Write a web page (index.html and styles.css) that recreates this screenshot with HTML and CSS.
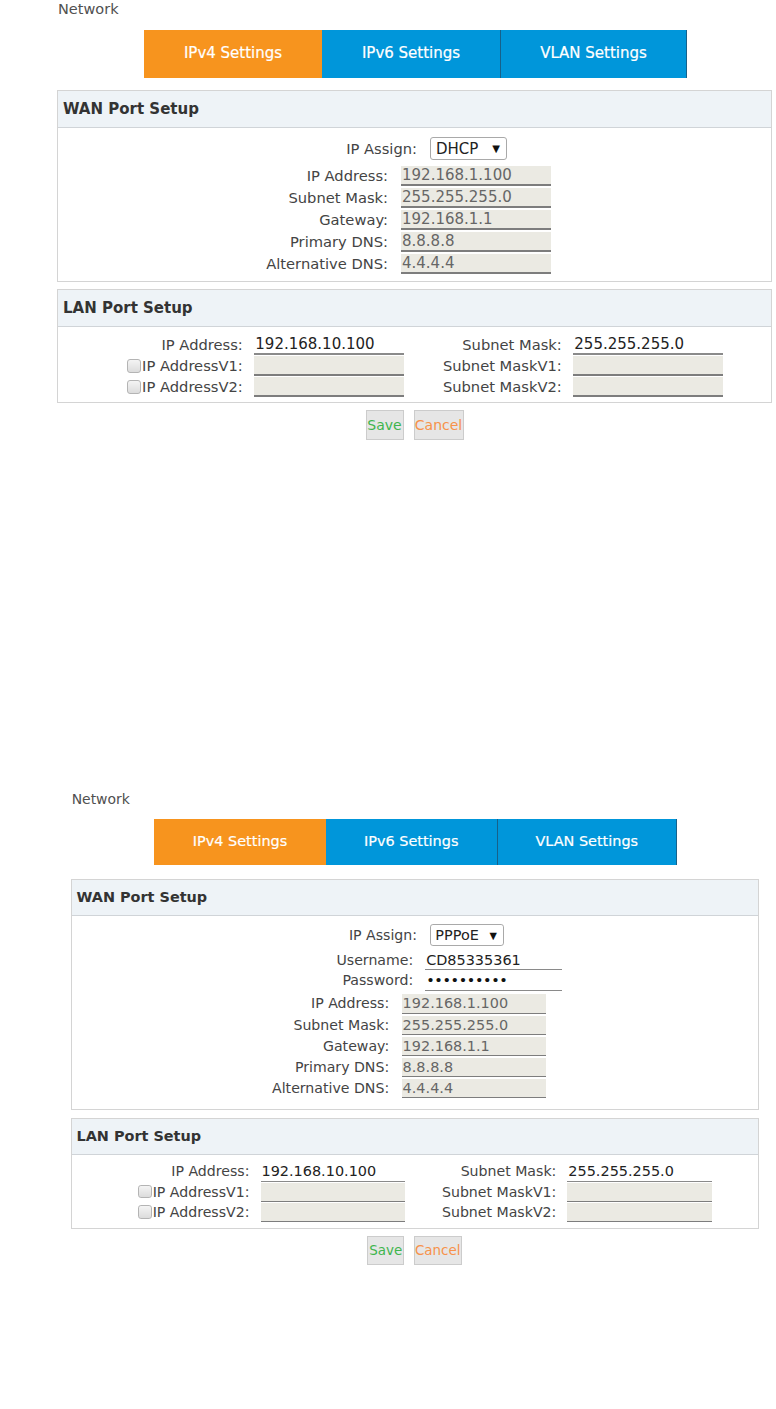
FILE: index.html
```html
<!DOCTYPE html>
<html lang="en">
<head>
<meta charset="utf-8">
<title>Network</title>
<link rel="stylesheet" href="styles.css">
</head>
<body>
<div class="screen screen-dhcp">
  <div class="title">Network</div>
  <div class="tabs">
    <div class="tab tab-active tab-v4">IPv4 Settings</div>
    <div class="tab tab-v6">IPv6 Settings</div>
    <div class="tab tab-vlan">VLAN Settings</div>
  </div>
  <section class="panel">
    <div class="panel-head">WAN Port Setup</div>
    <div class="panel-body wan-body">
      <div class="assign-row">
        <span class="lbl">IP Assign:</span>
        <div class="select"><span>DHCP</span><span class="arrow">▼</span></div>
      </div>
      <div class="ip-grid">
        <span class="lbl">IP Address:</span><span class="field ro">192.168.1.100</span>
        <span class="lbl">Subnet Mask:</span><span class="field ro">255.255.255.0</span>
        <span class="lbl">Gateway:</span><span class="field ro">192.168.1.1</span>
        <span class="lbl">Primary DNS:</span><span class="field ro">8.8.8.8</span>
        <span class="lbl">Alternative DNS:</span><span class="field ro">4.4.4.4</span>
      </div>
    </div>
  </section>
  <section class="panel panel-lan">
    <div class="panel-head">LAN Port Setup</div>
    <div class="panel-body lan-body">
      <div class="lan-grid">
        <span class="lbl">IP Address:</span><span class="field live">192.168.10.100</span>
        <span class="lbl">Subnet Mask:</span><span class="field live">255.255.255.0</span>
        <span class="lbl"><span class="check"></span>IP AddressV1:</span><span class="field ro"></span>
        <span class="lbl">Subnet MaskV1:</span><span class="field ro"></span>
        <span class="lbl"><span class="check"></span>IP AddressV2:</span><span class="field ro"></span>
        <span class="lbl">Subnet MaskV2:</span><span class="field ro"></span>
      </div>
    </div>
  </section>
  <div class="actions">
    <button class="btn btn-save">Save</button>
    <button class="btn btn-cancel">Cancel</button>
  </div>
</div>

<div class="screen screen-pppoe">
  <div class="title">Network</div>
  <div class="tabs">
    <div class="tab tab-active tab-v4">IPv4 Settings</div>
    <div class="tab tab-v6">IPv6 Settings</div>
    <div class="tab tab-vlan">VLAN Settings</div>
  </div>
  <section class="panel">
    <div class="panel-head">WAN Port Setup</div>
    <div class="panel-body wan-body">
      <div class="assign-row">
        <span class="lbl">IP Assign:</span>
        <div class="select"><span>PPPoE</span><span class="arrow">▼</span></div>
      </div>
      <div class="cred-grid">
        <span class="lbl">Username:</span><span class="field live">CD85335361</span>
        <span class="lbl">Password:</span><span class="field live dots">••••••••••</span>
      </div>
      <div class="ip-grid">
        <span class="lbl">IP Address:</span><span class="field ro">192.168.1.100</span>
        <span class="lbl">Subnet Mask:</span><span class="field ro">255.255.255.0</span>
        <span class="lbl">Gateway:</span><span class="field ro">192.168.1.1</span>
        <span class="lbl">Primary DNS:</span><span class="field ro">8.8.8.8</span>
        <span class="lbl">Alternative DNS:</span><span class="field ro">4.4.4.4</span>
      </div>
    </div>
  </section>
  <section class="panel panel-lan">
    <div class="panel-head">LAN Port Setup</div>
    <div class="panel-body lan-body">
      <div class="lan-grid">
        <span class="lbl">IP Address:</span><span class="field live">192.168.10.100</span>
        <span class="lbl">Subnet Mask:</span><span class="field live">255.255.255.0</span>
        <span class="lbl"><span class="check"></span>IP AddressV1:</span><span class="field ro"></span>
        <span class="lbl">Subnet MaskV1:</span><span class="field ro"></span>
        <span class="lbl"><span class="check"></span>IP AddressV2:</span><span class="field ro"></span>
        <span class="lbl">Subnet MaskV2:</span><span class="field ro"></span>
      </div>
    </div>
  </section>
  <div class="actions">
    <button class="btn btn-save">Save</button>
    <button class="btn btn-cancel">Cancel</button>
  </div>
</div>
</body>
</html>
```

FILE: styles.css
```css
html, body {
  margin: 0;
  padding: 0;
  background: #ffffff;
}

body {
  font-family: "DejaVu Sans", Verdana, sans-serif;
  color: #444444;
}

.screen {
  width: 715px;
  margin-left: 57px;
}

.screen-dhcp {
  margin-bottom: 350.5px;
}

.screen-pppoe {
  zoom: 0.962;
  margin-left: 73.5px;
}

.title {
  font-size: 14.5px;
  line-height: 18px;
  color: #505050;
  padding-left: 1px;
}

.tabs {
  display: flex;
  margin: 12px 0 12.5px 87px;
}

.screen-pppoe .tabs {
  margin-bottom: 14.5px;
}

.tab {
  box-sizing: border-box;
  height: 47.5px;
  line-height: 47.5px;
  text-align: center;
  font-size: 15px;
  color: #ffffff;
  background: #0096da;
  -webkit-text-stroke: 0.2px #ffffff;
}

.tab-v4 { width: 178px; }
.tab-v6 { width: 179px; border-right: 1px solid #17618a; }
.tab-vlan { width: 186px; border-right: 1px solid #17618a; }

.tab-active {
  background: #f7941e;
}

.panel {
  border: 1px solid #d4d4d4;
}

.panel-lan {
  margin-top: 7.5px;
}

.screen-pppoe .panel-lan {
  margin-top: 8px;
}

.panel-head {
  height: 36px;
  line-height: 36px;
  padding-left: 5px;
  background: #eef3f7;
  border-bottom: 1px solid #d0d4d8;
  font-size: 15px;
  font-weight: bold;
  color: #333333;
}

.wan-body {
  padding: 9px 0 7px;
}

.screen-pppoe .wan-body {
  padding-bottom: 11.5px;
}

.lbl {
  display: block;
  text-align: right;
  font-size: 14.7px;
  line-height: 20px;
  white-space: nowrap;
  color: #444444;
}

.assign-row {
  display: grid;
  grid-template-columns: 359px 77px;
  column-gap: 13px;
  align-items: center;
  height: 23px;
}

.select {
  box-sizing: border-box;
  display: flex;
  align-items: center;
  justify-content: space-between;
  height: 23px;
  padding: 0 6px 0 5px;
  border: 1px solid #a9a9a9;
  border-radius: 3px;
  background: #ffffff;
  font-size: 15px;
  color: #222222;
}

.arrow {
  font-size: 10px;
  color: #111111;
}

.cred-grid {
  display: grid;
  grid-template-columns: 355px 142px;
  column-gap: 12.5px;
  row-gap: 1px;
  margin-top: 5px;
}

.ip-grid {
  display: grid;
  grid-template-columns: 330px 150px;
  column-gap: 13px;
  row-gap: 2px;
  margin-top: 5.5px;
}

.screen-pppoe .ip-grid {
  margin-top: 4px;
}

.field {
  display: block;
  box-sizing: border-box;
  height: 20px;
  padding-left: 1px;
  font-size: 15px;
  line-height: 19px;
  white-space: nowrap;
  overflow: hidden;
}

.field.ro {
  background: #ebeae3;
  border-bottom: 2px solid #7d7d7d;
  color: #666666;
}

.field.live {
  background: #ffffff;
  border-bottom: 2px solid #8a8a8a;
  color: #222222;
}

.field.dots {
  letter-spacing: -0.4px;
  color: #111111;
}

.lan-body {
  padding: 8px 0 5px;
}

.screen-pppoe .lan-body {
  padding-bottom: 6.5px;
}

.lan-grid {
  display: grid;
  grid-template-columns: 196.3px 150px 169px 150px;
  row-gap: 1px;
}

.lan-grid .lbl {
  padding-right: 11.5px;
}

.check {
  display: inline-block;
  box-sizing: border-box;
  width: 14px;
  height: 14px;
  margin-right: 1px;
  vertical-align: -2px;
  border: 1px solid #b4b4b4;
  border-radius: 3px;
  background: linear-gradient(#f4f4f4, #dcdcdc);
}

.actions {
  display: flex;
  justify-content: center;
  gap: 10px;
  margin-top: 7px;
}

.btn {
  box-sizing: border-box;
  height: 30px;
  padding: 0;
  border: 1px solid #cccccc;
  border-radius: 0;
  background: #e6e6e6;
  font-family: "DejaVu Sans", Verdana, sans-serif;
  font-size: 14px;
}

.btn-save {
  width: 38px;
  color: #3fb54e;
}

.btn-cancel {
  width: 50px;
  color: #f7924a;
}
```
